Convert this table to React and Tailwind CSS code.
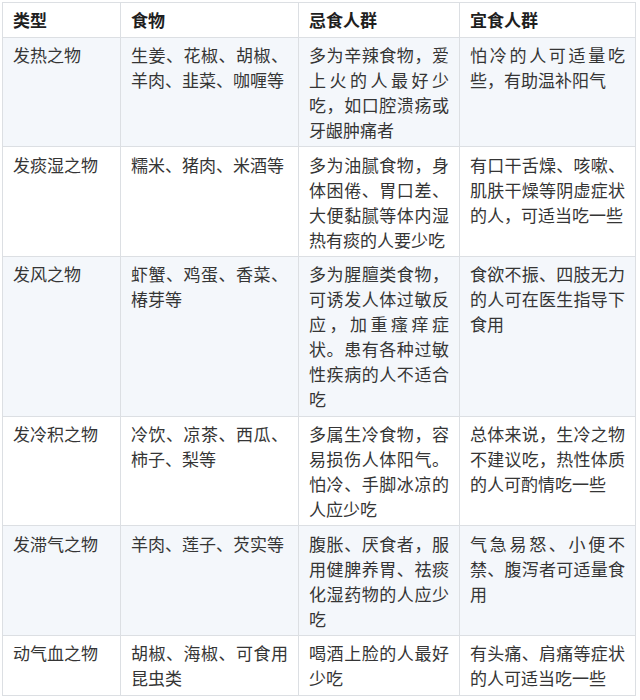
import React from "react";

const rows = [
  {
    type: "发热之物",
    food: "生姜、花椒、胡椒、羊肉、韭菜、咖喱等",
    avoid: "多为辛辣食物，爱上火的人最好少吃，如口腔溃疡或牙龈肿痛者",
    suit: "怕冷的人可适量吃些，有助温补阳气",
  },
  {
    type: "发痰湿之物",
    food: "糯米、猪肉、米酒等",
    avoid: "多为油腻食物，身体困倦、胃口差、大便黏腻等体内湿热有痰的人要少吃",
    suit: "有口干舌燥、咳嗽、肌肤干燥等阴虚症状的人，可适当吃一些",
  },
  {
    type: "发风之物",
    food: "虾蟹、鸡蛋、香菜、椿芽等",
    avoid: "多为腥膻类食物，可诱发人体过敏反应，加重瘙痒症状。患有各种过敏性疾病的人不适合吃",
    suit: "食欲不振、四肢无力的人可在医生指导下食用",
  },
  {
    type: "发冷积之物",
    food: "冷饮、凉茶、西瓜、柿子、梨等",
    avoid: "多属生冷食物，容易损伤人体阳气。怕冷、手脚冰凉的人应少吃",
    suit: "总体来说，生冷之物不建议吃，热性体质的人可酌情吃一些",
  },
  {
    type: "发滞气之物",
    food: "羊肉、莲子、芡实等",
    avoid: "腹胀、厌食者，服用健脾养胃、祛痰化湿药物的人应少吃",
    suit: "气急易怒、小便不禁、腹泻者可适量食用",
  },
  {
    type: "动气血之物",
    food: "胡椒、海椒、可食用昆虫类",
    avoid: "喝酒上脸的人最好少吃",
    suit: "有头痛、肩痛等症状的人可适当吃一些",
  },
];

const cell =
  "border border-[#dcdfe3] px-[10px] py-[4.35px] align-top text-justify";

export default function App() {
  return (
    <div className="bg-white w-[640px] h-[700px] pt-[2px] pl-[2px] font-['Noto_Sans_CJK_SC',sans-serif] text-[17px] leading-[25px] text-[#353535]">
      <table className="table-fixed border-collapse w-[633px]">
        <colgroup>
          <col className="w-[118px]" />
          <col className="w-[178px]" />
          <col className="w-[161px]" />
          <col className="w-[176px]" />
        </colgroup>
        <thead>
          <tr className="bg-white">
            <th className={cell + " text-left font-bold text-[#1f1f1f]"}>类型</th>
            <th className={cell + " text-left font-bold text-[#1f1f1f]"}>食物</th>
            <th className={cell + " text-left font-bold text-[#1f1f1f]"}>忌食人群</th>
            <th className={cell + " text-left font-bold text-[#1f1f1f]"}>宜食人群</th>
          </tr>
        </thead>
        <tbody>
          {rows.map((r, i) => (
            <tr key={r.type} className={i % 2 === 0 ? "bg-[#f4f7fb]" : "bg-white"}>
              <td className={cell}>{r.type}</td>
              <td className={cell}>{r.food}</td>
              <td className={cell}>{r.avoid}</td>
              <td className={cell}>{r.suit}</td>
            </tr>
          ))}
        </tbody>
      </table>
    </div>
  );
}
